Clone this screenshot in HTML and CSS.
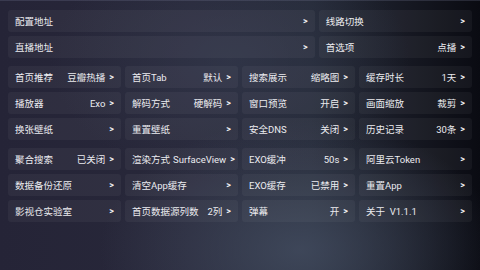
FILE: index.html
```html
<!DOCTYPE html>
<html lang="zh">
<head>
<meta charset="utf-8">
<link rel="stylesheet" href="styles.css">
</head>
<body>
<div class="screen">
  <div class="group group-top">
    <div class="item"><span class="label">配置地址</span><span class="value"></span><span class="chev">&gt;</span></div>
    <div class="item"><span class="label">线路切换</span><span class="value"></span><span class="chev">&gt;</span></div>
    <div class="item"><span class="label">直播地址</span><span class="value"></span><span class="chev">&gt;</span></div>
    <div class="item"><span class="label">首选项</span><span class="value">点播</span><span class="chev">&gt;</span></div>
  </div>
  <div class="group group-grid">
    <div class="item"><span class="label">首页推荐</span><span class="value">豆瓣热播</span><span class="chev">&gt;</span></div>
    <div class="item"><span class="label">首页Tab</span><span class="value">默认</span><span class="chev">&gt;</span></div>
    <div class="item"><span class="label">搜索展示</span><span class="value">缩略图</span><span class="chev">&gt;</span></div>
    <div class="item"><span class="label">缓存时长</span><span class="value">1天</span><span class="chev">&gt;</span></div>
    <div class="item"><span class="label">播放器</span><span class="value">Exo</span><span class="chev">&gt;</span></div>
    <div class="item"><span class="label">解码方式</span><span class="value">硬解码</span><span class="chev">&gt;</span></div>
    <div class="item"><span class="label">窗口预览</span><span class="value">开启</span><span class="chev">&gt;</span></div>
    <div class="item"><span class="label">画面缩放</span><span class="value">裁剪</span><span class="chev">&gt;</span></div>
    <div class="item"><span class="label">换张壁纸</span><span class="value"></span><span class="chev">&gt;</span></div>
    <div class="item"><span class="label">重置壁纸</span><span class="value"></span><span class="chev">&gt;</span></div>
    <div class="item"><span class="label">安全DNS</span><span class="value">关闭</span><span class="chev">&gt;</span></div>
    <div class="item"><span class="label">历史记录</span><span class="value">30条</span><span class="chev">&gt;</span></div>
  </div>
  <div class="group group-grid">
    <div class="item"><span class="label">聚合搜索</span><span class="value">已关闭</span><span class="chev">&gt;</span></div>
    <div class="item"><span class="label">渲染方式</span><span class="value">SurfaceView</span><span class="chev">&gt;</span></div>
    <div class="item"><span class="label">EXO缓冲</span><span class="value">50s</span><span class="chev">&gt;</span></div>
    <div class="item"><span class="label">阿里云Token</span><span class="value"></span><span class="chev">&gt;</span></div>
    <div class="item"><span class="label">数据备份还原</span><span class="value"></span><span class="chev">&gt;</span></div>
    <div class="item"><span class="label">清空App缓存</span><span class="value"></span><span class="chev">&gt;</span></div>
    <div class="item"><span class="label">EXO缓存</span><span class="value">已禁用</span><span class="chev">&gt;</span></div>
    <div class="item"><span class="label">重置App</span><span class="value"></span><span class="chev">&gt;</span></div>
    <div class="item"><span class="label">影视仓实验室</span><span class="value"></span><span class="chev">&gt;</span></div>
    <div class="item"><span class="label">首页数据源列数</span><span class="value">2列</span><span class="chev">&gt;</span></div>
    <div class="item"><span class="label">弹幕</span><span class="value">开</span><span class="chev">&gt;</span></div>
    <div class="item"><span class="label">关于&nbsp;&nbsp;V1.1.1</span><span class="value"></span><span class="chev">&gt;</span></div>
  </div>
</div>
</body>
</html>
```
FILE: styles.css
```css
html, body {
  margin: 0;
  padding: 0;
  width: 480px;
  height: 270px;
  overflow: hidden;
}

body {
  font-family: "Roboto", "Noto Sans CJK SC", sans-serif;
  font-size: 9.5px;
  color: #ececf0;
  background:
    radial-gradient(ellipse 200px 130px at 300px 250px, rgba(70, 80, 100, 0.75), rgba(70, 80, 100, 0) 100%),
    radial-gradient(ellipse 180px 120px at 230px 60px, rgba(55, 62, 82, 0.55), rgba(55, 62, 82, 0) 100%),
    linear-gradient(90deg, #252437 0%, #28283a 40%, #252a38 65%, #161822 85%, #0a0b12 100%);
}

.screen {
  box-sizing: border-box;
  width: 480px;
  height: 270px;
  padding: 10px 8px 0 8px;
  display: flex;
  flex-direction: column;
  gap: 8px;
  border-top: 1px solid rgba(120, 125, 150, 0.25);
}

.group {
  display: grid;
  gap: 4px;
  grid-auto-rows: 22px;
}

.group-top {
  grid-template-columns: 2fr 1fr;
  margin-top: -1px;
}

.group-grid {
  grid-template-columns: repeat(4, 1fr);
}

.item {
  display: flex;
  align-items: center;
  padding: 0 7px 0 7px;
  border-radius: 3px;
  background: rgba(255, 255, 255, 0.045);
  white-space: nowrap;
  min-width: 0;
}

.label {
  flex: 1 1 auto;
}

.value {
  flex: 0 0 auto;
  margin-left: 3px;
  text-align: right;
}

.chev {
  flex: 0 0 auto;
  margin-left: 4px;
  font-size: 9px;
  font-weight: 700;
  color: #f4f4f6;
}
```
